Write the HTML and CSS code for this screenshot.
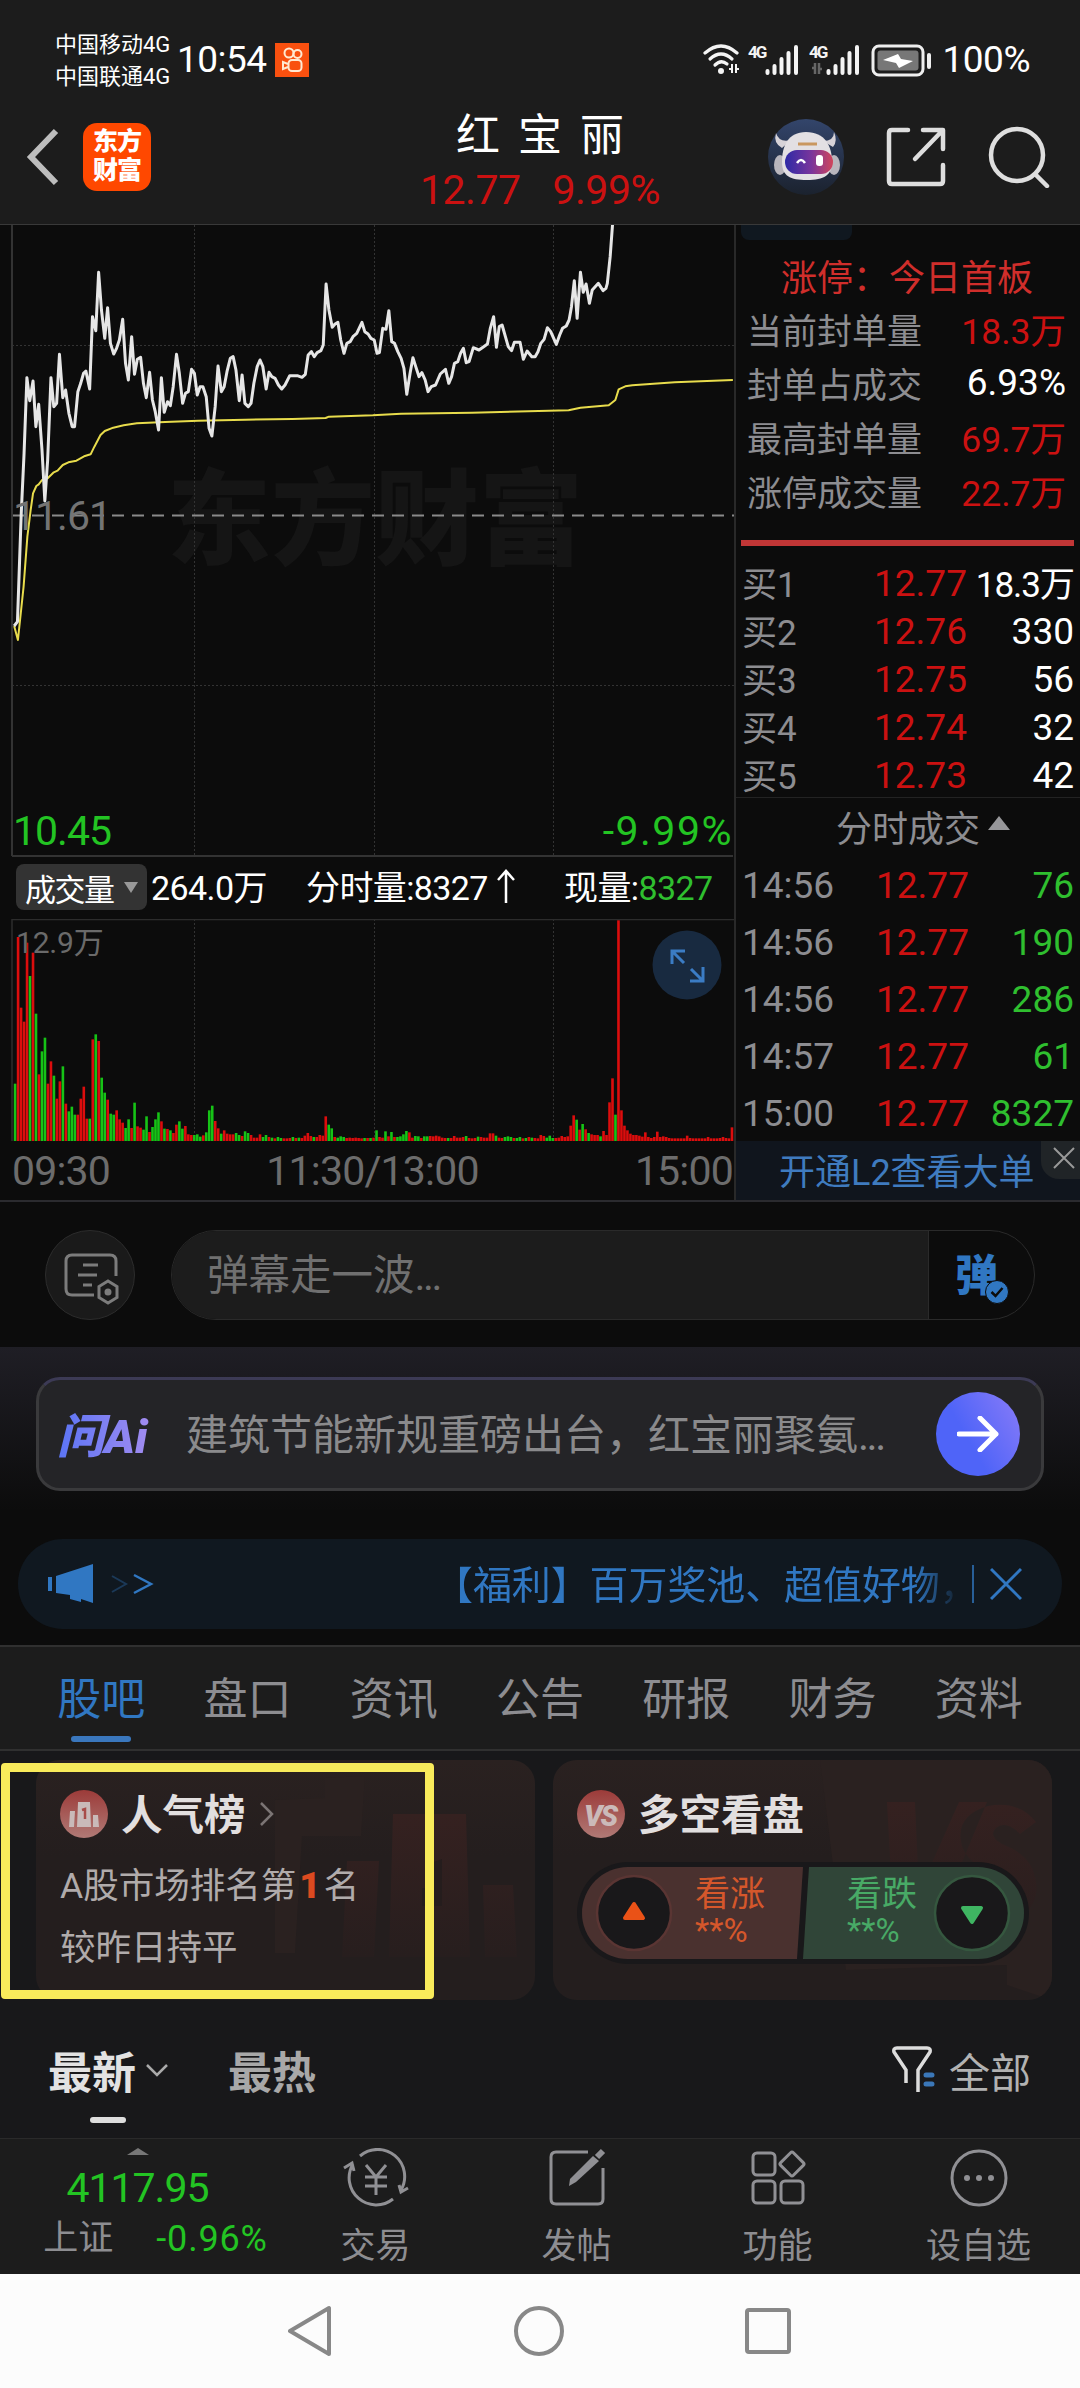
FILE: index.html
```html
<!DOCTYPE html>
<html lang="zh-CN">
<head>
    <meta charset="UTF-8">
    <meta name="viewport" content="width=device-width, initial-scale=1.0">
    <title>红宝丽 12.77 9.99%</title>
    <link rel="stylesheet" href="styles.css">
</head>
<body>
    <div class="status-bar">
        <div class="carriers">
            <span>中国移动4G</span>
            <span>中国联通4G</span>
        </div>
        <span class="clock">10:54</span>
        <svg class="app-badge" width="34" height="34" viewBox="0 0 34 34">
            <rect width="34" height="34" fill="#f9500f"/>
            <g fill="none" stroke="#ffe9d2" stroke-width="2">
                <circle cx="14" cy="10" r="4.5"/>
                <circle cx="22.5" cy="11" r="4"/>
                <rect x="13.500" y="17" width="13" height="11" rx="3.500"/>
                <path d="M13 21l-5-2v7l5-2"/>
            </g>
        </svg>
        <svg class="signals" width="240" height="36" viewBox="0 0 240 36">
            <g fill="none" stroke="#f4f4f4" stroke-width="3.2" stroke-linecap="round">
                <path d="M3 11Q19 -3 35 11"/>
                <path d="M8 17Q19 7 30 17"/>
                <path d="M13 23Q19 17 25 22"/>
            </g>
            <circle cx="19" cy="29" r="3" fill="#f4f4f4"/>
            <path d="M27 28h3v-5v9M37 28h-3v-5v9" transform="translate(0,-1)" fill="none" stroke="#f4f4f4" stroke-width="2"/>
            <text class="net" x="46" y="16">4G</text>
            <path d="M65.500 29v2M72.500 24v7M79.500 17v14M86.500 11v20M94 5v26" stroke="#f4f4f4" stroke-width="4" stroke-linecap="round"/>
            <text class="net" x="107" y="16">4G</text>
            <path d="M110 26h3v-5v11M120 27h-3v-6v11" fill="none" stroke="#666" stroke-width="2.500"/>
            <path d="M126.500 29v2M133.500 24v7M140.500 17v14M147.500 11v20M155 5v26" stroke="#f4f4f4" stroke-width="4" stroke-linecap="round"/>
            <rect x="171" y="4" width="50" height="29" rx="6" fill="none" stroke="#eee" stroke-width="3"/>
            <rect x="175.500" y="8.500" width="41" height="20" rx="3" fill="#777"/>
            <rect x="225" y="11" width="4" height="16" rx="2" fill="#eee"/>
            <path d="M181 18l13 3 3 5 14-7-12-2-3-5z" fill="#fff"/>
        </svg>
        <span class="battery">100%</span>
    </div>

    <header class="header">
        <div class="header-left">
            <svg width="34" height="58" viewBox="0 0 34 58"><path d="M31 3L6 29L31 55" fill="none" stroke="#bdbdbd" stroke-width="6"/></svg>
            <div class="logo">东方<br>财富</div>
        </div>
        <div class="stock">
            <h1>红 宝 丽</h1>
            <div class="quote"><span>12.77</span><span>9.99%</span></div>
        </div>
        <div class="header-right">
            <svg width="76" height="76" viewBox="0 0 76 76">
                <defs>
                    <linearGradient id="sky" x1="0" y1="0" x2="0" y2="1"><stop offset="0" stop-color="#33456b"/><stop offset="1" stop-color="#1b222e"/></linearGradient>
                    <linearGradient id="visor"><stop offset="0" stop-color="#2e2aa6"/><stop offset=".55" stop-color="#7a359c"/><stop offset="1" stop-color="#d0455b"/></linearGradient>
                </defs>
                <circle cx="38" cy="38" r="38" fill="url(#sky)"/>
                <ellipse cx="12" cy="46" rx="6" ry="10" fill="#b9b6bd"/>
                <ellipse cx="66" cy="46" rx="6" ry="10" fill="#b9b6bd"/>
                <path d="M8 14q-3 10 6 15l9-8q-12 3-15-7M66 13q4 9-1 15l-10-6q11 0 11-9" fill="#d7d3d8"/>
                <path d="M38 13c-18 0-24 14-24 30 0 14 8 18 25 18s25-5 25-18c0-16-7-30-26-30z" fill="#e3e0e3"/>
                <path d="M30 25h19" stroke="#c9975f" stroke-width="3"/>
                <rect x="17" y="31" width="48" height="24" rx="12" fill="url(#visor)"/>
                <path d="M29 44q4-6 8 0" fill="none" stroke="#fff" stroke-width="2.500"/>
                <rect x="48" y="36" width="7" height="11" rx="3" fill="#fff"/>
            </svg>
            <svg width="60" height="60" viewBox="0 0 60 60" fill="none" stroke="#dedede" stroke-width="4.500" stroke-linecap="round" stroke-linejoin="round">
                <path d="M22 3H6q-3 0-3 3v48q0 3 3 3h48q3 0 3-3V38M37 3h20v19M56 4L29 32"/>
            </svg>
            <svg width="62" height="62" viewBox="0 0 62 62" fill="none" stroke="#dedede" stroke-width="4.500" stroke-linecap="round">
                <circle cx="29" cy="29" r="26"/><path d="M48 49l11 11"/>
            </svg>
        </div>
    </header>

    <main class="market">
        <section class="charts">
            <svg class="price-chart" width="734" height="632" viewBox="0 0 734 632">
                <text class="watermark" x="167" y="332">东方财富</text>
                <g stroke="#333" stroke-dasharray="2 2">
                    <path d="M194.500 0V631M374.500 0V631M553.500 0V631M12 120.500H734M12 460.500H734"/>
                </g>
                <path d="M12 290.500H734" stroke="#8a8a8a" stroke-width="2" stroke-dasharray="12 8"/>
                <path d="M12 0V631M12 631H733" stroke="#333" stroke-width="2" fill="none"/>
                <g transform="translate(0,-5) scale(.4719,.33333)" fill="none" stroke-linejoin="round">
                    <polyline class="avg-line" points="30,1218 38,1260 50,1100 58,950 65,870 70,820 77,798 82,793 89,780 101,775 114,757 122,752 133,735 145,727 162,722 180,708 192,703 200,680 213,645 222,633 240,623 262,616 290,610 350,606 420,602 520,599 620,597 690,594 697,590 790,586 850,581 1000,578 1120,574 1205,571 1230,563 1290,556 1304,540 1311,508 1325,499 1340,496 1430,487 1553,480"/>
                    <polyline class="price-line" points="30,1218 37,1205 45,880 51,700 57,473 63,542 70,483 76,620 82,553 89,690 95,843 101,720 108,473 114,560 120,550 126,403 133,533 139,510 146,580 153,620 158,620 165,515 171,490 177,460 182,453 190,507 196,290 203,332 209,157 215,270 222,355 228,263 234,370 241,402 247,385 253,360 260,298 266,430 272,480 279,350 285,463 291,418 298,412 304,490 310,533 317,457 323,540 329,575 336,630 342,473 348,577 355,545 361,557 367,500 374,403 380,460 387,550 393,520 399,515 406,448 412,460 418,525 424,500 430,500 437,530 443,625 449,648 456,560 462,438 469,515 475,500 481,455 488,415 494,410 500,450 507,542 513,465 519,550 526,560 532,550 538,490 545,440 551,420 557,440 564,507 570,457 576,470 583,475 590,495 597,507 604,495 614,467 630,467 640,472 647,463 653,405 660,395 666,410 672,398 680,392 685,375 691,192 697,270 704,322 710,312 716,307 722,360 729,400 735,370 742,365 748,350 756,340 767,307 773,335 780,342 786,355 793,360 799,400 804,398 811,325 818,328 824,272 830,365 836,370 843,395 850,415 856,445 862,523 869,460 875,413 881,440 888,470 894,458 901,480 907,515 914,500 923,495 933,462 944,448 951,490 957,470 963,430 970,425 976,400 982,385 988,428 994,425 1003,383 1015,390 1025,380 1033,372 1039,325 1046,290 1052,382 1058,320 1064,315 1071,350 1077,380 1084,392 1090,367 1102,367 1109,418 1117,393 1127,410 1134,410 1140,395 1146,370 1153,358 1160,323 1167,335 1179,373 1186,345 1192,325 1200,318 1206,300 1211,260 1217,182 1223,295 1230,157 1236,217 1242,192 1249,250 1255,210 1268,190 1278,212 1284,205 1287,190 1293,110 1298,14"/>
                </g>
                <text class="axis-num mid" x="13" y="305">11.61</text>
                <text class="axis-num low" x="13" y="620">10.45</text>
                <text class="axis-num low change" x="733" y="620" text-anchor="end">-9.99%</text>
            </svg>

            <div class="vol-bar">
                <div class="vol-select">成交量<i class="arrow-down"></i></div>
                <span class="vol-total">264.0万</span>
                <span class="vol-minute">分时量:8327<svg width="20" height="36" viewBox="0 0 20 36"><path d="M10 35V4M2 12l8-9 8 9" fill="none" stroke="#fff" stroke-width="2.500"/></svg></span>
                <span class="vol-now">现量:<b>8327</b></span>
            </div>

            <svg class="vol-chart" width="734" height="223" viewBox="0 0 734 223">
                <path d="M194.500 0V222M374.500 0V222M553.500 0V222" stroke="#333" stroke-dasharray="2 2"/>
                <path d="M12 222V.500H734" stroke="#2c2c2c" stroke-width="1.500" fill="none"/>
                <g id="volBars"></g>
                <text class="vol-max" x="16" y="34">12.9万</text>
                <circle cx="687" cy="46" r="34.500" fill="#182a40"/>
                <path d="M672 45V32H685M672 32l12 12M703 48V62H690M703 62l-12-12" fill="none" stroke="#3b7cc4" stroke-width="3"/>
            </svg>
            <div class="time-axis"><span>09:30</span><span>11:30/13:00</span><span>15:00</span></div>
        </section>

        <aside class="depth">
            <div class="depth-tab"></div>
            <div class="limit-title">涨停：今日首板</div>
            <dl class="limit-list">
                <div><dt>当前封单量</dt><dd class="red">18.3万</dd></div>
                <div><dt>封单占成交</dt><dd>6.93%</dd></div>
                <div><dt>最高封单量</dt><dd class="red">69.7万</dd></div>
                <div><dt>涨停成交量</dt><dd class="red">22.7万</dd></div>
            </dl>
            <div class="red-line"></div>
            <div class="orders">
                <div class="row"><span>买1</span><span class="red">12.77</span><span class="tight">18.3万</span></div>
                <div class="row"><span>买2</span><span class="red">12.76</span><span>330</span></div>
                <div class="row"><span>买3</span><span class="red">12.75</span><span>56</span></div>
                <div class="row"><span>买4</span><span class="red">12.74</span><span>32</span></div>
                <div class="row"><span>买5</span><span class="red">12.73</span><span>42</span></div>
            </div>
            <div class="trades-title">分时成交<i class="arrow-up"></i></div>
            <div class="trades">
                <div class="row"><span>14:56</span><span class="red">12.77</span><span>76</span></div>
                <div class="row"><span>14:56</span><span class="red">12.77</span><span>190</span></div>
                <div class="row"><span>14:56</span><span class="red">12.77</span><span>286</span></div>
                <div class="row"><span>14:57</span><span class="red">12.77</span><span>61</span></div>
                <div class="row"><span>15:00</span><span class="red">12.77</span><span>8327</span></div>
            </div>
            <div class="l2">开通L2查看大单
                <span class="l2-close"><svg width="22" height="22" viewBox="0 0 22 22"><path d="M1 1l20 20M21 1L1 21" stroke="#999" stroke-width="2"/></svg></span>
            </div>
        </aside>
    </main>

    <div class="danmu">
        <div class="danmu-set">
            <svg width="56" height="54" viewBox="0 0 56 54" fill="none" stroke="#7c7c7c" stroke-width="3">
                <path d="M31 43H9q-6 0-6-6V9q0-6 6-6h38q6 0 6 6v15"/>
                <path d="M20 13h15M15 23h19M20 33h9"/>
                <path d="M45 29l9 5.500v11L45 51l-9-5.500v-11z"/><circle cx="45" cy="40" r="2" fill="#7c7c7c"/>
            </svg>
        </div>
        <div class="danmu-input">
            <span class="placeholder">弹幕走一波<i class="dots">...</i></span>
            <span class="danmu-switch">弹<svg width="24" height="24" viewBox="0 0 24 24"><circle cx="12" cy="12" r="11.500" fill="#3077c2" stroke="#0c0c0c"/><path d="M6.500 12l4 4 7-8" fill="none" stroke="#0c0c0c" stroke-width="2.500"/></svg></span>
        </div>
    </div>

    <div class="ask">
        <div class="ask-box">
            <span class="ask-logo">问Ai</span>
            <span class="ask-text">建筑节能新规重磅出台，红宝丽聚氨<i class="dots">...</i></span>
            <span class="ask-go"><svg width="42" height="36" viewBox="0 0 42 36"><path d="M2 18h37M23 2l16 16-16 16" fill="none" stroke="#fff" stroke-width="5" stroke-linecap="round" stroke-linejoin="round"/></svg></span>
        </div>
    </div>

    <div class="promo">
        <svg width="106" height="42" viewBox="0 0 106 42">
            <path d="M0 14h4v14H0zM8 13L45 1v39l-12-4v3l-11-3v-4L8 30z" fill="#3077c2"/>
            <path d="M64 13l14 8-14 8" fill="none" stroke="#3077c2" stroke-width="2" opacity=".35"/>
            <path d="M86 12l17 9-17 9" fill="none" stroke="#3077c2" stroke-width="2.500"/>
        </svg>
        <span class="promo-text">【福利】百万奖池、超值好物，</span>
        <span class="promo-close"><svg width="32" height="34" viewBox="0 0 32 34"><path d="M1 2l30 30M31 2L1 32" stroke="#3077c2" stroke-width="3"/></svg></span>
    </div>

    <nav class="tabs">
        <a class="active">股吧</a><a>盘口</a><a>资讯</a><a>公告</a><a>研报</a><a>财务</a><a>资料</a>
    </nav>

    <div class="cards">
        <section class="card">
            <svg class="card-bg" width="260" height="240" viewBox="0 0 260 240">
                <path d="M0 40L50 38V18L90 16L86 76H27L20 193H0z" fill="#2a2120"/>
                <path d="M72 101h32l-5 96H67zM118 54h73l4 143h-81zM208 125h30l4 72h-32z" fill="url(#podium)"/>
                <path d="M150 105l17-6v47h-20v-18h4z" fill="#251d1d"/>
                <defs><linearGradient id="podium" x1="0" y1="0" x2="0" y2="1"><stop offset="0" stop-color="#352120"/><stop offset="1" stop-color="#271e1e"/></linearGradient></defs>
            </svg>
            <h2>
                <svg width="48" height="48" viewBox="0 0 48 48"><circle cx="24" cy="24" r="24" fill="url(#badge)"/><path d="M10 21h5l-1 16H9zM18 12h12l1 25H17zM33 25h5l1 12h-6z" fill="#c9bab9"/><path d="M22 20l3-1v10" fill="none" stroke="#a84c49" stroke-width="2.500"/>
                    <defs><linearGradient id="badge" x1="0" y1="0" x2="0" y2="1"><stop offset="0" stop-color="#9c3b39"/><stop offset="1" stop-color="#b07a76"/></linearGradient></defs>
                </svg>
                <span>人气榜</span>
                <svg class="more" width="16" height="26" viewBox="0 0 16 26"><path d="M2 2l11 11L2 24" fill="none" stroke="#7b7474" stroke-width="2.500"/></svg>
            </h2>
            <p>A股市场排名第<b>1</b>名</p>
            <p>较昨日持平</p>
        </section>
        <section class="card vs-card">
            <svg class="card-bg" width="260" height="240" viewBox="0 0 260 240">
                <path d="M28 0H260V240L215 225V205L54 210z" fill="#2a2120"/>
                <path d="M95 42h28l4 90 40-90h28l-62 150h-30zM244 62q-18-22-48-16-34 10-26 40 6 18 30 26 18 8 8 22-14 14-36-4l-14 22q26 24 58 12 40-18 24-56-8-16-30-24-14-8-6-16 10-8 24 6z" fill="url(#podium)"/>
            </svg>
            <h2>
                <svg width="48" height="48" viewBox="0 0 48 48"><circle cx="24" cy="24" r="24" fill="url(#badge)"/><text class="vs" x="23" y="36" text-anchor="middle">VS</text></svg>
                <span>多空看盘</span>
            </h2>
            <svg class="vote" width="452" height="102" viewBox="0 0 452 102">
                <rect width="452" height="102" rx="51" fill="#19181a"/>
                <path d="M51 5H226L220 97H51A46 46 0 0 1 51 5z" fill="#4a312f"/>
                <path d="M232 5H401A46 46 0 0 1 401 97H226z" fill="#304538"/>
                <circle cx="57" cy="51" r="37" fill="#19181a" stroke="#5a3533" stroke-width="2.500"/>
                <circle cx="395" cy="51" r="37" fill="#19181a" stroke="#35573f" stroke-width="2.500"/>
                <path d="M57 42l9 14H48z" fill="#ea5217" stroke="#ea5217" stroke-width="4" stroke-linejoin="round"/>
                <path d="M395 60l9-14h-18z" fill="#3fb562" stroke="#3fb562" stroke-width="4" stroke-linejoin="round"/>
                <text class="up" x="118" y="44">看涨</text><text class="up pct" x="118" y="80">**%</text>
                <text class="down" x="270" y="44">看跌</text><text class="down pct" x="270" y="80">**%</text>
            </svg>
        </section>
        <div class="highlight"></div>
    </div>

    <div class="sort">
        <span class="newest">最新<svg width="22" height="14" viewBox="0 0 22 14"><path d="M1 2l10 10L21 2" fill="none" stroke="#aaa" stroke-width="2.500"/></svg></span>
        <span class="hottest">最热</span>
        <span class="filter">
            <svg width="44" height="48" viewBox="0 0 44 48"><path d="M14 37V24L2 6q-1-4 3-4h30q4 0 3 4L26 24V46" fill="none" stroke="#ddd" stroke-width="3.500"/><path d="M34 29h6M34 38h6" stroke="#3b77b8" stroke-width="5" stroke-linecap="round"/></svg>
            全部
        </span>
    </div>

    <footer class="bottom-nav">
        <div class="index">
            <i class="arrow-up"></i>
            <strong>4117.95</strong>
            <div><span>上证</span><em>-0.96%</em></div>
        </div>
        <a>
            <svg width="66" height="60" viewBox="0 0 66 60" fill="none" stroke="#909094" stroke-width="3">
                <path d="M17 8A27 27 0 0 1 58 42M50 51A27 27 0 0 1 10 16M1 20l8-5 2 8M65 40l-7 4-2-7"/>
                <path d="M23 17l10 12 10-12M33 29v18M22 29h22M22 38h22"/>
            </svg>交易
        </a>
        <a>
            <svg width="60" height="60" viewBox="0 0 60 60" fill="none" stroke="#909094" stroke-width="3">
                <path d="M41 4H9q-5 0-5 5v42q0 5 5 5h42q5 0 5-5V20"/>
                <path d="M22 38l1-7L46 8l6 5-23 21z" fill="#909094" stroke="none"/><path d="M50 9l6-6" stroke-width="6"/>
            </svg>发帖
        </a>
        <a>
            <svg width="60" height="60" viewBox="0 0 60 60" fill="none" stroke="#909094" stroke-width="3">
                <rect x="5" y="5" width="22" height="22" rx="4"/><rect x="5" y="33" width="22" height="22" rx="4"/><rect x="33" y="33" width="22" height="22" rx="4"/>
                <rect x="35" y="7" width="18" height="18" rx="2" transform="rotate(45 44 16)"/>
            </svg>功能
        </a>
        <a>
            <svg width="60" height="60" viewBox="0 0 60 60"><circle cx="30" cy="30" r="27" fill="none" stroke="#909094" stroke-width="3"/><g fill="#909094"><circle cx="18" cy="30" r="3"/><circle cx="30" cy="30" r="3"/><circle cx="42" cy="30" r="3"/></g></svg>设自选
        </a>
    </footer>

    <div class="sys-nav">
        <svg width="46" height="54" viewBox="0 0 46 54"><path d="M41 4v46L2 27z"/></svg>
        <svg width="54" height="54" viewBox="0 0 54 54"><circle cx="27" cy="27" r="23"/></svg>
        <svg width="48" height="54" viewBox="0 0 48 54"><rect x="3" y="6" width="42" height="42" rx="2"/></svg>
    </div>

    <script>
        // minute volumes, "g" marks a falling minute
        const volumes = `172g 612 400 358 595 495g 565 382g 200 269g 310g 172 239 196g 127 179 224g 112 89g 103g
            79g 79 127 163 67 67g 305 320g 300 190g 145g 124 82g 79g 92 65 55 39g 65g 39
            115g 44 40 34g 74g 27 42g 65g 86g 59 37g 36 32g 24 49 59g 37g 45 20 18
            18g 20g 13g 17 26g 92g 106g 60 38 22g 32 22 20 20 24g 18g 15 29g 24g 18
            10 10 20 12g 18g 12 10g 8 12g 9g 8 8 9 12g 9 10g 9 16 24 15
            12g 12 18 16 74 49g 38g 12 10g 14g 12g 9 10 9 10 9 8 9g 9 9g
            10 32g 12 10 29g 14 27g 12 12g 14g 20g 30g 26 10 15g 14g 9 14g 14g 15
            14 16 14 10 9 9g 9 15 10 10 12 15g 9 8 9 13g 12 10 10 23
            23 16g 10 9 12g 14g 12g 9 9g 12g 8 9g 12 10g 9 8 18 15 10g 16g
            9g 9 10 15 12 14 46 77 64g 34 51g 35 24g 20 18 18 14g 30 18 116
            188 79g 662 92 46 32 22 18 18 16 13 26 12 9 12 28 12 14 12 9
            8 8 8 8 8 16 9 8 8 8 8 8 12 8 8 8 9 12 9 8 41`.trim().split(/\s+/);
        const ns = 'http://www.w3.org/2000/svg';
        const group = document.getElementById('volBars');
        volumes.forEach((v, i) => {
            const h = parseInt(v) / 3;
            const bar = document.createElementNS(ns, 'rect');
            bar.setAttribute('x', 13.8 + i * 2.987);
            bar.setAttribute('y', 222 - h);
            bar.setAttribute('width', 2.6);
            bar.setAttribute('height', h);
            bar.setAttribute('fill', v.endsWith('g') ? '#16c316' : '#dc0d0d');
            group.appendChild(bar);
        });
    </script>
</body>
</html>
```
FILE: styles.css
```css
* {
    box-sizing: border-box;
}

body {
    margin: 0;
    width: 1080px;
    background: #0c0c0c;
    color: #fff;
    font-family: Roboto, "Noto Sans CJK SC", sans-serif;
    overflow-x: hidden;
}

svg {
    display: block;
    flex: none;
}

h1, h2, p, dl, dd {
    margin: 0;
    font-weight: normal;
}

i, em {
    font-style: normal;
}

.red {
    color: #cb1111;
}

.dots {
    letter-spacing: -2.5px;
}

/* status bar */
.status-bar {
    height: 110px;
    display: flex;
    align-items: center;
    padding: 8px 50px 0 55px;
    background: #1c1c1c;
}

.carriers {
    width: 122px;
    padding-top: 4px;
    display: flex;
    flex-direction: column;
    font-size: 22px;
    line-height: 32px;
    white-space: nowrap;
}

.clock, .battery {
    font-size: 37px;
    letter-spacing: -.5px;
}

.app-badge {
    margin-left: 8px;
    margin-top: 2px;
}

.signals {
    margin-left: auto;
    margin-right: 1px;
    margin-top: 2px;
}

.net {
    font: bold 17px Roboto, sans-serif;
    fill: #f4f4f4;
    letter-spacing: -2px;
}

/* header */
.header {
    height: 115px;
    display: grid;
    grid-template-columns: 360px 360px 360px;
    background: #1c1c1c;
    border-bottom: 1px solid #393939;
}

.header-left {
    display: flex;
    align-items: center;
    gap: 24px;
    padding-left: 25px;
    padding-bottom: 20px;
}

.logo {
    width: 68px;
    height: 68px;
    border-radius: 14px;
    background: #ff4800;
    font-size: 25px;
    line-height: 29px;
    font-weight: 900;
    text-align: center;
    padding-top: 4px;
    letter-spacing: -1px;
}

.stock {
    text-align: center;
}

.stock h1 {
    height: 53px;
    line-height: 52px;
    font-size: 44px;
    word-spacing: 7px;
}

.quote {
    display: flex;
    justify-content: center;
    gap: 32px;
    font-size: 41px;
    line-height: 55px;
    color: #cb1111;
    letter-spacing: -.5px;
}

.header-right {
    display: flex;
    align-items: center;
    justify-content: flex-end;
    padding: 0 30px 20px 0;
}

.header-right svg {
    margin-left: 42px;
}

/* charts */
.market {
    display: flex;
    height: 977px;
    border-bottom: 2px solid #2b2b2f;
}

.charts {
    width: 734px;
}

.watermark {
    font: 900 104px "Noto Sans CJK SC", sans-serif;
    fill: #151515;
}

.price-line {
    stroke: #e6e6e6;
    stroke-width: 3px;
    vector-effect: non-scaling-stroke;
}

.avg-line {
    stroke: #e8dc4c;
    stroke-width: 2px;
    vector-effect: non-scaling-stroke;
}

.axis-num {
    font-size: 41px;
    letter-spacing: -1px;
}

.axis-num.change {
    letter-spacing: 1.500px;
}

.mid {
    fill: #747474;
}

.low {
    fill: #23c423;
}

.vol-bar {
    height: 62px;
    display: flex;
    align-items: center;
    padding-left: 16px;
    padding-bottom: 2px;
    font-size: 34px;
    letter-spacing: -.6px;
    white-space: nowrap;
}

.vol-select {
    width: 131px;
    height: 46px;
    border-radius: 8px;
    background: #333;
    display: flex;
    align-items: center;
    padding-left: 9px;
    font-size: 31px;
    letter-spacing: -1.5px;
}

.arrow-down {
    border: 7px solid transparent;
    border-top: 11px solid #999;
    border-bottom: 0;
    margin-left: 10px;
}

.vol-total {
    margin-left: 4px;
    margin-top: -3px;
    width: 155px;
}

.vol-minute {
    display: flex;
    align-items: center;
    gap: 8px;
    width: 258px;
    margin-top: -3px;
}

.vol-now {
    margin-top: -3px;
}

.vol-now b {
    font-weight: normal;
    color: #2fbf2f;
}

.vol-max {
    font-size: 30px;
    letter-spacing: -.2px;
    fill: #6a6a6a;
}

.time-axis {
    height: 58px;
    padding: 0 1px 0 12px;
    display: flex;
    justify-content: space-between;
    align-items: center;
    font-size: 41px;
    letter-spacing: -.8px;
    color: #6c6c6c;
}

/* order depth */
.depth {
    width: 346px;
    border-left: 2px solid #292929;
}

.depth-tab {
    width: 111px;
    height: 15px;
    margin-left: 5px;
    border-radius: 0 0 8px 8px;
    background: #101820;
}

.limit-title {
    height: 64px;
    margin-top: 7px;
    line-height: 64px;
    padding-left: 45px;
    font-size: 36px;
    color: #d02e2b;
    white-space: nowrap;
}

.limit-list {
    margin-top: -10px;
    padding: 0 14px 0 11px;
}

.limit-list div {
    height: 54px;
    display: flex;
    align-items: center;
    justify-content: space-between;
    font-size: 35px;
}

.limit-list dt {
    color: #8d8d91;
}

.limit-list dd {
    font-size: 37px;
}

.limit-list dd.red {
    font-size: 35.5px;
}

.red-line {
    height: 6px;
    margin: 23px 6px 13px 5px;
    background: #c13636;
}

.row {
    display: flex;
    align-items: center;
    height: 48px;
    padding: 0 6px 0 6px;
    font-size: 37px;
}

.row span {
    white-space: nowrap;
}

.row span:first-child {
    width: 132px;
    font-size: 35px;
    color: #8d8d91;
}

.row span:last-child {
    margin-left: auto;
}

.row .tight {
    font-size: 35px;
    letter-spacing: -1px;
}

.orders {
    height: 239px;
    border-bottom: 1px solid #232323;
}

.orders .row span:first-child, .orders .tight {
    margin-top: -4px;
}

.trades-title {
    height: 59px;
    display: flex;
    align-items: center;
    padding-left: 100px;
    padding-bottom: 4px;
    font-size: 36px;
    color: #8d8d91;
}

.arrow-up {
    border: 11px solid transparent;
    border-bottom: 14px solid #97979a;
    border-top: 0;
    margin-left: 8px;
    margin-bottom: 6px;
}

.trades .row {
    height: 57px;
}

.trades .row span:first-child {
    width: 134px;
    font-size: 37px;
}

.trades .row span:last-child {
    color: #2fbf2f;
}

.l2 {
    position: relative;
    height: 59px;
    margin-top: -1px;
    line-height: 64px;
    padding-left: 43px;
    background: #10151d;
    color: #3f7bbf;
    font-size: 36px;
    white-space: nowrap;
}

.l2-close {
    position: absolute;
    top: 0;
    right: 0;
    width: 39px;
    height: 38px;
    padding: 6px 0 0 12px;
    border-radius: 0 0 0 18px;
    background: #202427;
}

/* danmu */
.danmu {
    height: 145px;
    display: flex;
    align-items: center;
    gap: 36px;
    padding: 1px 45px 0;
}

.danmu-set {
    width: 90px;
    height: 90px;
    border: 1px solid #2c2c2c;
    border-radius: 50%;
    background: #1a1a1a;
    padding: 21px 0 0 17px;
}

.danmu-input {
    display: flex;
    width: 864px;
    height: 90px;
    border: 1.5px solid #2a2a2a;
    border-radius: 45px;
    overflow: hidden;
    line-height: 90px;
}

.placeholder {
    width: 757px;
    padding-left: 35px;
    background: #1c1c1c;
    border-right: 1px solid #2a2a2a;
    color: #707070;
    font-size: 41.5px;
}

.danmu-switch {
    position: relative;
    padding-left: 26px;
    color: #3077c2;
    font-size: 43px;
    font-weight: 900;
}

.danmu-switch svg {
    position: absolute;
    left: 56px;
    top: 49px;
}

/* ask ai */
.ask {
    height: 192px;
    padding: 30px 36px 0;
    background: linear-gradient(#1f1e25, #0c0c0c 85%);
}

.ask-box {
    height: 114px;
    display: flex;
    align-items: center;
    padding: 0 21px 0 18px;
    border: 3px solid #3a3a3c;
    border-top-color: #3c3a55;
    border-radius: 24px;
    background: #242427;
}

.ask-logo {
    width: 129px;
    margin-top: -3px;
    font-size: 47px;
    font-weight: 900;
    font-style: italic;
    background: linear-gradient(90deg, #5a74f5, #a58df0 75%);
    -webkit-background-clip: text;
    background-clip: text;
    color: transparent;
}

.ask-text {
    margin-top: -5px;
    font-size: 42px;
    color: #8a8a8c;
    white-space: nowrap;
}

.ask-go {
    width: 84px;
    height: 84px;
    margin-left: auto;
    border-radius: 50%;
    background: linear-gradient(60deg, #4f64f8 40%, #8a7cf8);
    display: flex;
    align-items: center;
    justify-content: center;
}

/* promo */
.promo {
    height: 90px;
    margin: 0 18px 16px;
    padding: 0 38px 0 30px;
    display: flex;
    align-items: center;
    border-radius: 45px;
    background: #101820;
}

.promo-text {
    width: 546px;
    margin-left: 280px;
    margin-top: -5px;
    overflow: hidden;
    white-space: nowrap;
    font-size: 39px;
    letter-spacing: -.1px;
    color: #3077c2;
    -webkit-mask-image: linear-gradient(90deg, #000 88%, rgba(0, 0, 0, .2) 95%);
    mask-image: linear-gradient(90deg, #000 88%, rgba(0, 0, 0, .2) 95%);
}

.promo-close {
    height: 38px;
    margin-left: -8px;
    padding: 2px 0 0 16px;
    border-left: 2px solid #285f98;
}

/* tabs */
.tabs {
    height: 106px;
    display: flex;
    padding: 0 28px;
    background: #1c1c1c;
    border-top: 2px solid #303030;
    border-bottom: 2px solid #303030;
}

.tabs a {
    position: relative;
    flex: 1;
    text-align: center;
    font-size: 44px;
    line-height: 107px;
    color: #8d8d91;
}

.tabs .active {
    color: #3077c2;
}

.tabs .active::after {
    content: "";
    position: absolute;
    left: 43px;
    bottom: 7px;
    width: 60px;
    height: 6px;
    border-radius: 3px;
    background: #3a77bd;
}

/* cards */
.cards {
    position: relative;
    display: flex;
    gap: 18px;
    height: 249px;
    padding: 9px 28px 0 36px;
    background: #18181a;
}

.card {
    position: relative;
    width: 499px;
    height: 240px;
    padding: 20px 24px 0;
    border-radius: 24px;
    overflow: hidden;
    background: linear-gradient(#2a2120, #241e1e 40%);
}

.card-bg {
    position: absolute;
    top: 0;
    right: 0;
}

.card h2 {
    position: relative;
    display: flex;
    align-items: center;
    gap: 13px;
    height: 68px;
    font-size: 41.5px;
    font-weight: bold;
    color: #e2dfdf;
}

.card h2 span {
    margin-top: -4px;
}

.card p {
    position: relative;
    height: 63px;
    padding-top: 6px;
    line-height: 63px;
    font-size: 35.5px;
    color: #b0abab;
}

.card p b {
    color: #dc4a20;
    font-weight: 900;
    font-size: 37px;
    margin: 0 3px;
}

.vs {
    font: italic 900 29px Roboto, sans-serif;
    letter-spacing: -2px;
    fill: #cbbab9;
}

.vote {
    position: relative;
    margin-top: 14px;
    font-size: 35px;
}

.up {
    fill: #d5572b;
}

.down {
    fill: #48aa66;
}

.pct {
    font-size: 33px;
}

/* marker frame drawn over the first card */
.highlight {
    position: absolute;
    left: 1px;
    top: 12px;
    width: 433px;
    height: 236px;
    border: 9px solid #f9eb5b;
    border-radius: 4px;
}

/* sort */
.sort {
    height: 138px;
    display: flex;
    align-items: center;
    padding: 0 49px 0 48px;
    background: #18181a;
    font-size: 44px;
    font-weight: bold;
}

.newest, .filter {
    position: relative;
    display: flex;
    align-items: center;
    gap: 10px;
    height: 70px;
    margin-top: 2px;
    color: #e2e2e2;
}

.newest::after {
    content: "";
    position: absolute;
    left: 42px;
    bottom: -18px;
    width: 36px;
    height: 6px;
    border-radius: 3px;
    background: #ddd;
}

.hottest {
    margin-left: 60px;
    margin-top: 2px;
    color: #a8a8a8;
}

.filter {
    margin-left: auto;
    gap: 13px;
    font-size: 41px;
    font-weight: normal;
    color: #b2b2b2;
}

/* bottom nav */
.bottom-nav {
    height: 136px;
    display: flex;
    background: #1c1c1c;
    border-top: 1px solid #2a2a2a;
}

.bottom-nav a {
    width: 201px;
    display: flex;
    flex-direction: column;
    align-items: center;
    padding-top: 9px;
    font-size: 35px;
    line-height: 77px;
    color: #8d8d91;
}

.index {
    width: 275px;
    display: flex;
    flex-direction: column;
    align-items: center;
    padding-top: 9px;
}

.index .arrow-up {
    border-width: 0 11px 7px;
    margin: 0;
    border-bottom-color: #777;
}

.index strong {
    font-size: 41px;
    font-weight: normal;
    line-height: 67px;
    letter-spacing: -1px;
    color: #23c423;
}

.index div {
    display: flex;
    gap: 43px;
    margin-left: 36px;
    font-size: 35px;
    line-height: 34px;
    color: #8d8d91;
    white-space: nowrap;
}

.index em {
    font-size: 36px;
    letter-spacing: .8px;
    color: #23c423;
}

/* system nav */
.sys-nav {
    height: 114px;
    display: flex;
    align-items: center;
    justify-content: center;
    gap: 178px;
    background: #fcfcfc;
}

.sys-nav svg {
    fill: none;
    stroke: #888;
    stroke-width: 4px;
    stroke-linejoin: round;
}
```
